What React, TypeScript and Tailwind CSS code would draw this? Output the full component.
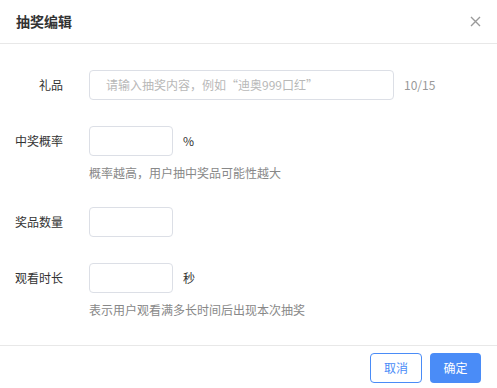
import React from "react";

const font = { fontFamily: '"Noto Sans CJK SC", "Noto Sans", sans-serif' };

function Label({ children }: { children: React.ReactNode }) {
  return (
    <div className="w-[47px] shrink-0 whitespace-nowrap flex justify-end text-[12px] leading-[30px] text-[#333]">
      {children}
    </div>
  );
}

function Box({ w }: { w: string }) {
  return (
    <div className={`${w} h-[30px] rounded-[4px] border border-[#dcdfe6] bg-white`} />
  );
}

export default function App() {
  return (
    <div className="w-[497px] h-[388px] bg-white flex flex-col" style={font}>
      <div className="h-[43px] shrink-0 flex items-center justify-between px-4 border-b border-[#e8e8e8] box-content">
        <div className="text-[14px] font-bold text-[#333]">抽奖编辑</div>
        <svg width="11" height="11" viewBox="0 0 11 11" className="mr-0">
          <path d="M1 1L10 10M10 1L1 10" stroke="#9a9a9a" strokeWidth="1.4" />
        </svg>
      </div>
      <div className="flex-1 px-4 pt-[26px] pb-[27px] flex flex-col gap-[26px]">
        <div className="flex items-center">
          <Label>礼品</Label>
          <div className="ml-[26px] w-[305px] h-[30px] rounded-[4px] border border-[#dcdfe6] flex items-center pl-4 text-[12px] text-[#b8b8b8] whitespace-nowrap">
            请输入抽奖内容，例如“迪奥999口红”
          </div>
          <div className="ml-[10px] text-[12px] text-[#999]">10/15</div>
        </div>
        <div className="flex flex-col">
          <div className="flex items-center">
            <Label>中奖概率</Label>
            <div className="ml-[26px]">
              <Box w="w-[84px]" />
            </div>
            <div className="ml-[10px] text-[12px] text-[#333]">%</div>
          </div>
          <div className="ml-[73px] mt-[9px] text-[12px] leading-[16px] text-[#888] whitespace-nowrap">
            概率越高，用户抽中奖品可能性越大
          </div>
        </div>
        <div className="flex items-center">
          <Label>奖品数量</Label>
          <div className="ml-[26px]">
            <Box w="w-[84px]" />
          </div>
        </div>
        <div className="flex flex-col">
          <div className="flex items-center">
            <Label>观看时长</Label>
            <div className="ml-[26px]">
              <Box w="w-[84px]" />
            </div>
            <div className="ml-[10px] text-[12px] text-[#333]">秒</div>
          </div>
          <div className="ml-[73px] mt-[9px] text-[12px] leading-[16px] text-[#888] whitespace-nowrap">
            表示用户观看满多长时间后出现本次抽奖
          </div>
        </div>
      </div>
      <div className="border-t border-[#e8e8e8] px-4 pt-[7px] pb-[5px] flex justify-end gap-2 shrink-0">
        <button className="w-[52px] h-[30px] rounded-[4px] border border-[#4a8cf7] bg-white text-[12px] text-[#4a8cf7]">
          取消
        </button>
        <button className="w-[51px] h-[30px] rounded-[4px] bg-[#4a8cf7] text-[12px] text-white">
          确定
        </button>
      </div>
    </div>
  );
}
